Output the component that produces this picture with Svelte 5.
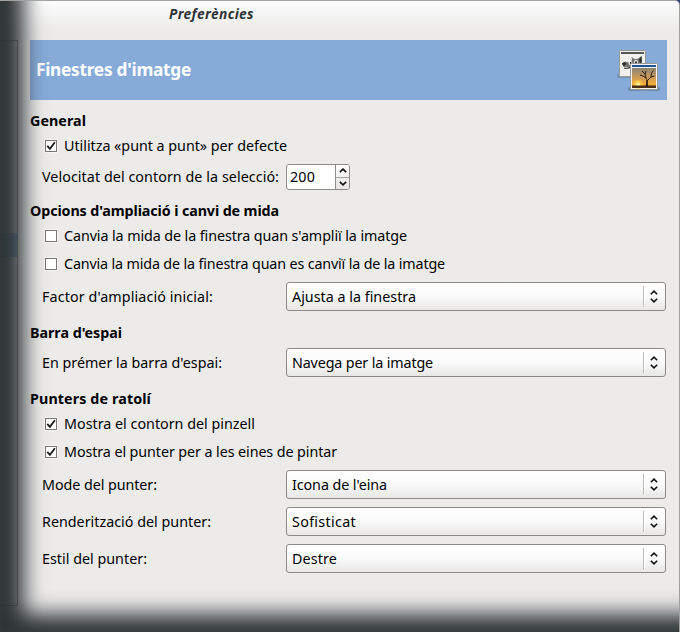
<script>
  // Letter spacing is tuned so that each label occupies its design width.
  function fit(node, width) {
    const n = [...node.textContent].length;
    const natural = node.getBoundingClientRect().width;
    node.style.letterSpacing = (width - natural) / n + 'px';
  }

  const groups = [
    {
      title: 'General', w: 56, gap: 10,
      rows: [
        { kind: 'check', on: true, label: 'Utilitza «punt a punt» per defecte', w: 223 },
        { kind: 'spin', label: 'Velocitat del contorn de la selecció:', w: 237, value: '200', vw: 25 }
      ]
    },
    {
      title: "Opcions d'ampliació i canvi de mida", w: 249, gap: 6,
      rows: [
        { kind: 'check', on: false, label: "Canvia la mida de la finestra quan s'ampliï la imatge", w: 343 },
        { kind: 'check', on: false, label: 'Canvia la mida de la finestra quan es canviï la de la imatge', w: 381 },
        { kind: 'combo', label: "Factor d'ampliació inicial:", w: 171, value: 'Ajusta a la finestra', vw: 124 }
      ]
    },
    {
      title: "Barra d'espai", w: 92, gap: 7,
      rows: [
        { kind: 'combo', label: "En prémer la barra d'espai:", w: 180, value: 'Navega per la imatge', vw: 141 }
      ]
    },
    {
      title: 'Punters de ratolí', w: 121, gap: 7,
      rows: [
        { kind: 'check', on: true, label: 'Mostra el contorn del pinzell', w: 191 },
        { kind: 'check', on: true, label: 'Mostra el punter per a les eines de pintar', w: 273 },
        { kind: 'combo', label: 'Mode del punter:', w: 115, value: "Icona de l'eina", vw: 95 },
        { kind: 'combo', label: 'Renderització del punter:', w: 169, value: 'Sofisticat', vw: 64 },
        { kind: 'combo', label: 'Estil del punter:', w: 105, value: 'Destre', vw: 45 }
      ]
    }
  ];
</script>

<div class="window">
  <div class="title"><span use:fit={85}>Preferències</span></div>
  <div class="body">
    <aside><div class="selected"></div></aside>
    <main>
      <header>
        <span use:fit={155}>Finestres d'imatge</span>
        <svg width="48" height="48" viewBox="0 0 48 48">
          <defs>
            <linearGradient id="sky" x1="0" y1="0" x2="0" y2="1">
              <stop offset="0" stop-color="#8a8474" />
              <stop offset=".45" stop-color="#c99a58" />
              <stop offset=".8" stop-color="#f3ae3c" />
              <stop offset="1" stop-color="#c9752a" />
            </linearGradient>
          </defs>
          <rect x="5" y="31" width="30" height="4" rx="2" fill="#5a6e88" opacity=".4" />
          <rect x="7.500" y="7.500" width="26" height="26" rx="1" fill="#f0f0ed" stroke="#999993" />
          <rect x="9" y="9" width="23" height="2" fill="#555753" />
          <path d="M10 20.500c1-1.500 3-2 5-1.500 2 1 4-.5 5-2l-.5-3 3 2h3l4-3 .5 6-2 4-4 3h-5l-4-2c-2 1-4-.5-5-3.500z" fill="#73746e" />
          <path d="M10 20.500l2.500-1.500 2 2-3 2.500zM27 16l2.500-3 .3 6-1.800 2z" fill="#30322f" />
          <circle cx="18.500" cy="20" r="1.900" fill="#fff" />
          <circle cx="24" cy="19" r="1.900" fill="#fff" />
          <circle cx="18.700" cy="20" r=".9" />
          <circle cx="24" cy="19.200" r=".9" />
          <path d="M12 25c3 1 5 0 7-1" fill="none" stroke="#222" />
          <rect x="16" y="44" width="32" height="4" rx="2" fill="#4f6684" opacity=".45" />
          <rect x="18.500" y="20.500" width="27" height="26" rx="1" fill="#f4f4f1" stroke="#999993" />
          <rect x="20" y="22" width="24" height="2" fill="#225198" />
          <rect x="20" y="25" width="24" height="20" fill="url(#sky)" />
          <circle cx="26" cy="41.500" r="4.500" fill="#ffd34a" opacity=".6" />
          <circle cx="26" cy="41.500" r="2" fill="#fff29b" />
          <path d="M20 42.500h24V45H20z" fill="#4b3018" />
          <path d="M34.800 43c.8-4 .2-6-.8-8l-3-2-3-1M34 35l-1-4-3-3M35 38l4-4 .5-4 2-2.500M39 34l3.500-1M33 31l1-3" fill="none" stroke="#2c1e14" stroke-width="1" />
          <path d="M34 43.500l.5-6h1l.3 6z" fill="#201409" />
        </svg>
      </header>

      {#each groups as g}
        <section style:margin-top="{g.gap}px">
          <h2><span use:fit={g.w}>{g.title}</span></h2>
          {#each g.rows as r}
            {#if r.kind === 'check'}
              <div class="check">
                <i class="box">
                  {#if r.on}
                    <svg width="12" height="12" viewBox="0 0 12 12"><path d="M2.300 5.800L4.900 8.800 9.900 2.200" fill="none" stroke="#1b1b1b" stroke-width="1.800" /></svg>
                  {/if}
                </i>
                <span use:fit={r.w}>{r.label}</span>
              </div>
            {:else if r.kind === 'spin'}
              <div class="row spinrow">
                <div class="label"><span use:fit={r.w}>{r.label}</span></div>
                <div class="spin">
                  <div class="num"><span use:fit={r.vw}>{r.value}</span></div>
                  <div class="arrows">
                    <i><svg width="8" height="5" viewBox="0 0 8 5"><path d="M.8 4.200L4 1.200l3.200 3" /></svg></i>
                    <i><svg width="8" height="5" viewBox="0 0 8 5"><path d="M.8.8L4 3.800l3.200-3" /></svg></i>
                  </div>
                </div>
              </div>
            {:else}
              <div class="row">
                <div class="label"><span use:fit={r.w}>{r.label}</span></div>
                <div class="combo">
                  <span use:fit={r.vw}>{r.value}</span>
                  <i class="sep"></i>
                  <svg width="8" height="13" viewBox="0 0 8 13"><path d="M.8 4.300L4 1.200l3.200 3.100M.8 8.700L4 11.800l3.200-3.100" /></svg>
                </div>
              </div>
            {/if}
          {/each}
        </section>
      {/each}
    </main>
  </div>
  <div class="shade"></div>
</div>

<style>
  :global(body) { background: #26407c; overflow: hidden; }
  .window {
    position: relative;
    box-sizing: border-box;
    width: 680px;
    height: 632px;
    overflow: hidden;
    border-top: 1px solid #a3a3a1;
    border-right: 1px solid #a0a09e;
    border-top-right-radius: 5px;
    background: linear-gradient(#fdfdfd, #ecebea 29px);
    color: #000;
    font: 14.3px/20px 'Noto Sans', 'Open Sans', sans-serif;
    white-space: nowrap;
  }
  span { display: inline-block; }
  .title {
    height: 39px;
    box-sizing: border-box;
    padding: 3px 0 0 169px;
    color: #2e3436;
    font-size: 13.7px;
    font-weight: bold;
    font-style: italic;
  }
  .body { display: flex; }
  aside {
    box-sizing: border-box;
    width: 18px;
    height: 566px;
    margin-right: 12px;
    border: solid #80827f;
    border-width: 1px 1px 1px 0;
    padding-top: 192px;
  }
  .selected { height: 24px; background: #86abd9; }
  main { width: 637px; }
  header {
    height: 60px;
    box-sizing: border-box;
    display: flex;
    align-items: center;
    justify-content: space-between;
    padding: 0 7px 0 6px;
    background: #86abd9;
    color: #fff;
    font-size: 17.3px;
    font-weight: bold;
  }
  header svg { margin-top: -6px; }
  h2 {
    margin: 0;
    height: 22px;
    font: bold 14.3px/22px 'Noto Sans', 'Open Sans', sans-serif;
  }
  .check {
    display: flex;
    align-items: center;
    height: 28px;
    padding-left: 15px;
  }
  .box {
    box-sizing: border-box;
    display: flex;
    width: 12px;
    height: 12px;
    margin-right: 7px;
    border: 1px solid #777775;
    background: #fff;
    box-shadow: 0 0 0 1px #f6f5f4;
  }
  .box svg { flex: none; margin: -1px; }
  .row {
    display: flex;
    align-items: center;
    height: 37px;
    padding-left: 12px;
  }
  .spinrow { height: 34px; }
  .label { width: 244px; }
  .combo {
    box-sizing: border-box;
    display: flex;
    align-items: center;
    width: 380px;
    height: 29px;
    padding: 0 7.5px 0 5px;
    border: 1px solid #8c8b89;
    border-radius: 3px;
    background: linear-gradient(#fff, #fafafa 50%, #e8e7e6);
  }
  .sep {
    width: 1px;
    height: 21px;
    margin: 0 5.5px 0 auto;
    background: #bdbcba;
    box-shadow: 1px 0 #fff;
  }
  .combo path, .arrows path { fill: none; stroke: #111; stroke-width: 1.6; }
  .spin {
    box-sizing: border-box;
    display: flex;
    width: 64px;
    height: 26px;
    border: 1px solid #8c8b89;
    border-radius: 3px;
    background: #fff;
    overflow: hidden;
  }
  .num {
    width: 48px;
    box-sizing: border-box;
    padding: 2px 0 0 3px;
  }
  .arrows {
    flex: 1;
    display: flex;
    flex-direction: column;
    border-left: 1px solid #8c8b89;
    background: linear-gradient(#fff, #e6e5e4);
  }
  .arrows i {
    flex: 1;
    display: flex;
    align-items: center;
    justify-content: center;
  }
  .arrows i + i { border-top: 1px solid #a5a4a2; }
  .shade {
    position: absolute;
    inset: -80px -80px 0 0;
    box-shadow: inset 24px -18px 21px #2e3436;
    pointer-events: none;
  }
</style>
